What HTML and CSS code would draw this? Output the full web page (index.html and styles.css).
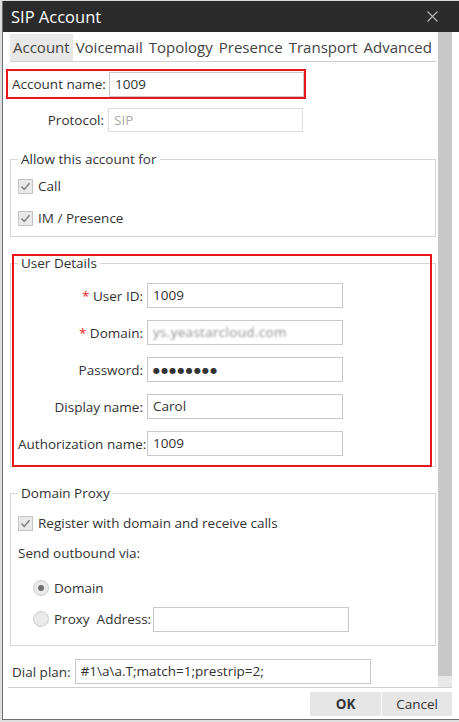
FILE: index.html
```html
<!DOCTYPE html>
<html lang="en">
<head>
<meta charset="utf-8">
<title>SIP Account</title>
<link rel="stylesheet" href="styles.css">
</head>
<body>
<div class="window">
  <div class="titlebar">
    <span class="title">SIP Account</span>
    <svg class="close" width="11" height="11" viewBox="0 0 11 11"><path d="M0.5 0.5 L10.5 10.5 M10.5 0.5 L0.5 10.5" stroke="#b8b8b8" stroke-width="1.1" fill="none"/></svg>
  </div>
  <div class="main">
    <div class="content">
      <div class="tabs">
        <span class="tab active">Account</span>
        <span class="tab">Voicemail</span>
        <span class="tab">Topology</span>
        <span class="tab">Presence</span>
        <span class="tab">Transport</span>
        <span class="tab">Advanced</span>
      </div>

      <div class="acct-box">
        <span class="lbl">Account name:</span>
        <div class="input w195">1009</div>
      </div>

      <div class="proto-row">
        <span class="lbl right">Protocol:</span>
        <div class="input w195 disabled">SIP</div>
      </div>

      <fieldset class="group allow">
        <legend>Allow this account for</legend>
        <div class="check"><span class="cb"><svg width="15" height="15" viewBox="0 0 15 15"><path d="M3.5 7.5 L6.2 10.5 L11.5 4.2" stroke="#7b7b7b" stroke-width="1.4" fill="none"/></svg></span>Call</div>
        <div class="check second"><span class="cb"><svg width="15" height="15" viewBox="0 0 15 15"><path d="M3.5 7.5 L6.2 10.5 L11.5 4.2" stroke="#7b7b7b" stroke-width="1.4" fill="none"/></svg></span>IM / Presence</div>
      </fieldset>

      <div class="user-wrap">
        <fieldset class="group user">
          <legend>User Details</legend>
          <div class="form-grid">
            <span class="lbl right"><span class="req">*</span> User ID:</span>
            <div class="input">1009</div>
            <span class="lbl right"><span class="req">*</span> Domain:</span>
            <div class="input"><span class="blurred">ys.yeastarcloud.com</span></div>
            <span class="lbl right">Password:</span>
            <div class="input"><span class="dots">●●●●●●●●</span></div>
            <span class="lbl right">Display name:</span>
            <div class="input">Carol</div>
            <span class="lbl right">Authorization name:</span>
            <div class="input">1009</div>
          </div>
        </fieldset>
        <div class="highlight"></div>
      </div>

      <fieldset class="group proxy">
        <legend>Domain Proxy</legend>
        <div class="check first"><span class="cb"><svg width="15" height="15" viewBox="0 0 15 15"><path d="M3.5 7.5 L6.2 10.5 L11.5 4.2" stroke="#7b7b7b" stroke-width="1.4" fill="none"/></svg></span>Register with domain and receive calls</div>
        <div class="plain-row">Send outbound via:</div>
        <div class="radio-row domain"><span class="radio on"></span>Domain</div>
        <div class="radio-row proxy-row"><span class="radio"></span>Proxy<span class="addr">Address:</span><div class="input">&nbsp;</div></div>
      </fieldset>

      <div class="dial-row">
        <span class="lbl">Dial plan:</span>
        <div class="input w296">#1\a\a.T;match=1;prestrip=2;</div>
      </div>
    </div>
    <div class="scrollbar"><div class="thumb"></div></div>
  </div>
  <div class="footer">
    <button class="btn ok">OK</button>
    <button class="btn">Cancel</button>
  </div>
</div>
</body>
</html>
```

FILE: styles.css
```css
* { box-sizing: border-box; }

body {
  margin: 0;
  background: #dedede;
  font-family: "Open Sans", "Noto Sans", sans-serif;
  font-size: 13.5px;
  color: #333;
}

.window {
  margin: 1px 0 0 2px;
  width: 457px;
  height: 719px;
  background: #fff;
  border-left: 1px solid #6f6f6f;
  border-bottom: 1px solid #6f6f6f;
  display: flex;
  flex-direction: column;
}

.titlebar {
  height: 31px;
  flex: none;
  background: #2b2b2b;
  color: #fff;
  display: flex;
  align-items: center;
  justify-content: space-between;
  padding: 0 21px 0 8px;
}
.title { font-size: 16.5px; }
.close { display: block; }

.main {
  height: 655px;
  flex: none;
  display: flex;
}

.content {
  flex: 1;
  padding: 2px 2px 0 7px;
}

.scrollbar {
  width: 14px;
  margin-right: 7px;
  background: #e8e8e8;
}
.thumb {
  height: 644px;
  background: #c8c8c8;
}

/* tabs */
.tabs {
  display: flex;
  height: 28px;
  border-bottom: 1px solid #cfcfcf;
}
.tab {
  padding: 0 3px;
  line-height: 27px;
  font-size: 15px;
  color: #444;
}
.tab.active { background: #e8e8e8; }

/* inputs */
.input {
  height: 25px;
  border: 1px solid #c9c9c9;
  padding: 0 5px;
  line-height: 23px;
  color: #333;
  white-space: nowrap;
  overflow: hidden;
  background: #fff;
}
.input.disabled { color: #aaa; border-color: #dedede; }
.w195 { width: 195px; }
.w296 { width: 296px; }

.lbl { white-space: nowrap; }
.right { text-align: right; }
.req { color: #e22; }

/* account box */
.acct-box {
  margin: 7px 0 0 -4px;
  width: 300px;
  height: 30px;
  border: 2px solid #e8161b;
  display: flex;
  align-items: center;
  justify-content: space-between;
  padding-left: 4px;
}

.proto-row {
  margin-top: 9px;
  display: grid;
  grid-template-columns: 94px 195px;
  column-gap: 4px;
  align-items: center;
}
.proto-row .input { height: 24px; line-height: 22px; }

/* groups */
.group {
  margin: 17px 0 0 0;
  min-width: 0;
  border: 1px solid #d6d6d6;
  padding: 5px 8px 6px 7px;
}
.group legend {
  padding: 0 3px;
  line-height: 20px;
  color: #333;
}

.check {
  display: flex;
  align-items: center;
  gap: 5px;
  height: 24px;
}
.check.second { margin-top: 8px; }
.cb {
  width: 15px;
  height: 15px;
  border: 1px solid #c4c4c4;
  background: #e9e9e9;
  display: flex;
  align-items: center;
  justify-content: center;
}
.cb svg { display: block; margin: -1px; }

/* user details */
.user-wrap {
  position: relative;
  margin-top: 16px;
}
.group.user {
  margin: 0;
  padding: 10px 8px 10px 7px;
}
.form-grid {
  display: grid;
  grid-template-columns: 125px 196px;
  column-gap: 4px;
  row-gap: 12px;
  align-items: center;
}
.blurred {
  color: #8f8f8f;
  filter: blur(1.1px);
  letter-spacing: 0.3px;
}
.dots {
  font-family: "DejaVu Sans", sans-serif;
  font-size: 8px;
  letter-spacing: 1.2px;
  color: #333;
  vertical-align: 1px;
}
.highlight {
  position: absolute;
  left: 2px;
  top: 1px;
  width: 420px;
  height: 213px;
  border: 2px solid #e8161b;
  pointer-events: none;
}

/* proxy */
.group.proxy {
  margin-top: 16px;
  padding: 8px 8px 14px 7px;
}
.plain-row {
  margin-top: 6px;
  height: 24px;
  line-height: 24px;
}
.radio-row {
  display: flex;
  align-items: center;
  height: 24px;
  padding-left: 15px;
}
.radio-row.domain { margin-top: 11px; }
.radio-row.proxy-row { margin-top: 7px; }
.radio {
  width: 16px;
  height: 16px;
  border-radius: 50%;
  border: 1px solid #cdcdcd;
  background: #e9e9e9;
  margin-right: 5px;
  display: flex;
  align-items: center;
  justify-content: center;
}
.radio.on::after {
  content: "";
  width: 6px;
  height: 6px;
  border-radius: 50%;
  background: #6e6e6e;
}
.addr { margin-left: 7px; margin-right: 2px; }
.proxy-row .input { width: 196px; height: 25px; }

/* dial plan */
.dial-row {
  margin: 13px 0 0 2px;
  display: flex;
  align-items: center;
  gap: 4px;
}

/* footer */
.footer {
  flex: 1;
  margin: 0 7px 0 5px;
  border-top: 1px solid #cfcfcf;
  display: flex;
  justify-content: flex-end;
  align-items: flex-start;
  gap: 1px;
  padding-top: 4px;
}
.btn {
  height: 24px;
  border: none;
  background: #e6e6e6;
  font-family: "Open Sans", "Noto Sans", sans-serif;
  font-size: 13.5px;
  color: #333;
  padding: 0;
}
.btn.ok { width: 71px; font-weight: 700; }
.btn:not(.ok) { width: 70px; }
```
